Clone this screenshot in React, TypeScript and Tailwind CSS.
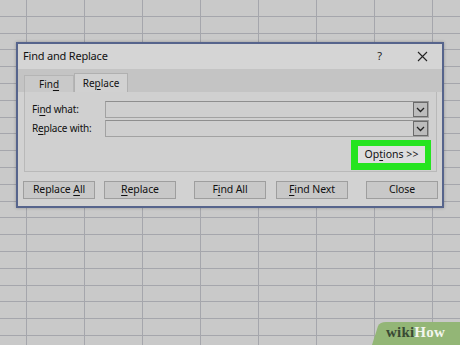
import React from "react";

const U = ({ children }: { children: React.ReactNode }) => (
  <span className="underline underline-offset-[1.5px] decoration-[0.8px]">{children}</span>
);

function Chevron() {
  return (
    <div className="w-[15px] h-full bg-[#bcbcbc] border border-[#6a6a6a] flex items-center justify-center">
      <svg width="9" height="6" viewBox="0 0 9 6">
        <path d="M1 1 L4.5 4.5 L8 1" fill="none" stroke="#222" strokeWidth="1.3" />
      </svg>
    </div>
  );
}

function Combo() {
  return (
    <div className="flex-1 h-[17px] flex bg-[#cfcfcf] border border-[#a2a2a2] border-t-[#8e8e8e]">
      <div className="flex-1" />
      <Chevron />
    </div>
  );
}

function Btn({ children, className = "" }: { children: React.ReactNode; className?: string }) {
  return (
    <div
      className={
        "h-[18px] w-[72px] flex items-center justify-center bg-[#c8c8c8] border border-[#9e9e9e] text-[10.5px] text-[#111] tracking-[-0.1px] " +
        className
      }
    >
      {children}
    </div>
  );
}

export default function App() {
  const cols = [27, 58, 58, 58, 58, 58, 58, 58, 58];
  const rows = Array.from({ length: 21 });
  return (
    <div
      className="relative w-[460px] h-[345px] overflow-hidden bg-[#c9c9c9]"
      style={{ fontFamily: '"Noto Sans", "Open Sans", sans-serif' }}
    >
      {/* spreadsheet grid */}
      <div className="flex flex-col">
        {rows.map((_, r) => (
          <div key={r} className="flex h-[16.8px] shrink-0 border-b border-[#a5a6ac]">
            {cols.map((w, c) => (
              <div
                key={c}
                className="h-full shrink-0 border-r border-[#a5a6ac]"
                style={{ width: w }}
              />
            ))}
          </div>
        ))}
      </div>

      {/* dialog */}
      <div className="absolute left-[16px] top-[42px] w-[428px] h-[166px] border-2 border-[#56648c] bg-[#d2d2d2] flex flex-col shadow-[0_0_3px_rgba(0,0,0,0.25)]">
        {/* title bar */}
        <div className="h-[25px] flex items-center pl-[5px] pr-[14px] bg-[#d5d5d5]">
          <span className="text-[11px] text-[#111] tracking-[-0.2px]">Find and Replace</span>
          <div className="flex-1" />
          <span className="text-[11px] text-[#222] mr-[35px]">?</span>
          <svg width="11" height="11" viewBox="0 0 11 11">
            <path d="M1 1 L10 10 M10 1 L1 10" stroke="#222" strokeWidth="1.1" />
          </svg>
        </div>

        {/* tab strip */}
        <div className="h-[23px] bg-[#c4c4c4] flex items-end pl-[6px]">
          <div className="w-[50px] h-[17px] bg-[#c9c9c9] border border-b-0 border-[#b5b5b5] flex items-center justify-center text-[10px] text-[#111]">
            <span>
              Fin<U>d</U>
            </span>
          </div>
          <div className="w-[54px] h-[19px] bg-[#d1d1d1] border border-b-0 border-[#b0b0b0] flex items-center justify-center text-[10px] text-[#111]">
            <span>
              Re<U>p</U>lace
            </span>
          </div>
        </div>

        {/* panel */}
        <div className="mx-[6px] mr-[5px] h-[80px] bg-[#d0d0d0] border border-[#b9b9b9] border-t-0 flex flex-col pt-[9px] pl-[7px] pr-[7px] gap-[2px]">
          <div className="flex items-center">
            <span className="w-[73px] text-[10px] text-[#111] tracking-[-0.2px]">
              Fi<U>n</U>d what:
            </span>
            <Combo />
          </div>
          <div className="flex items-center">
            <span className="w-[73px] text-[10px] text-[#111] tracking-[-0.2px]">
              R<U>e</U>place with:
            </span>
            <Combo />
          </div>
          <div className="flex justify-end mt-[1px] -mr-[2px]">
            <div className="w-[80px] h-[30px] bg-[#25e420] pl-[7px] pr-[6px] pt-[6px] pb-[7px]">
              <div className="w-full h-full bg-[#dedede] flex items-center justify-center text-[10.5px] text-[#111]">
                <span>
                  Op<U>t</U>ions &gt;&gt;
                </span>
              </div>
            </div>
          </div>
        </div>

        {/* buttons */}
        <div className="flex items-center mt-[9px] pl-[5px]">
          <Btn>
            <span>
              Replace <U>A</U>ll
            </span>
          </Btn>
          <Btn className="ml-[9px]">
            <span>
              <U>R</U>eplace
            </span>
          </Btn>
          <Btn className="ml-[18px] w-[71px]">
            <span>
              F<U>i</U>nd All
            </span>
          </Btn>
          <Btn className="ml-[10px] border-[#2f3f8f] border-[1.5px]">
            <span>
              <U>F</U>ind Next
            </span>
          </Btn>
          <Btn className="ml-[18px]">
            <span>Close</span>
          </Btn>
        </div>
      </div>

      {/* wikiHow logo */}
      <div className="absolute right-0 bottom-0 w-[88px] h-[23px]">
        <svg width="88" height="23" viewBox="0 0 88 23" className="absolute inset-0">
          <path d="M0 23 L6 4 Q8 0 14 0 L88 0 L88 23 Z" fill="#93b676" />
        </svg>
        <div
          className="absolute left-[14px] top-[3px] text-[15px] font-bold leading-none tracking-[0.2px]"
          style={{ fontFamily: '"Liberation Serif", serif' }}
        >
          <span className="text-[#3a4a34]">wiki</span>
          <span className="text-[#f2f5ee]">How</span>
        </div>
      </div>
    </div>
  );
}
